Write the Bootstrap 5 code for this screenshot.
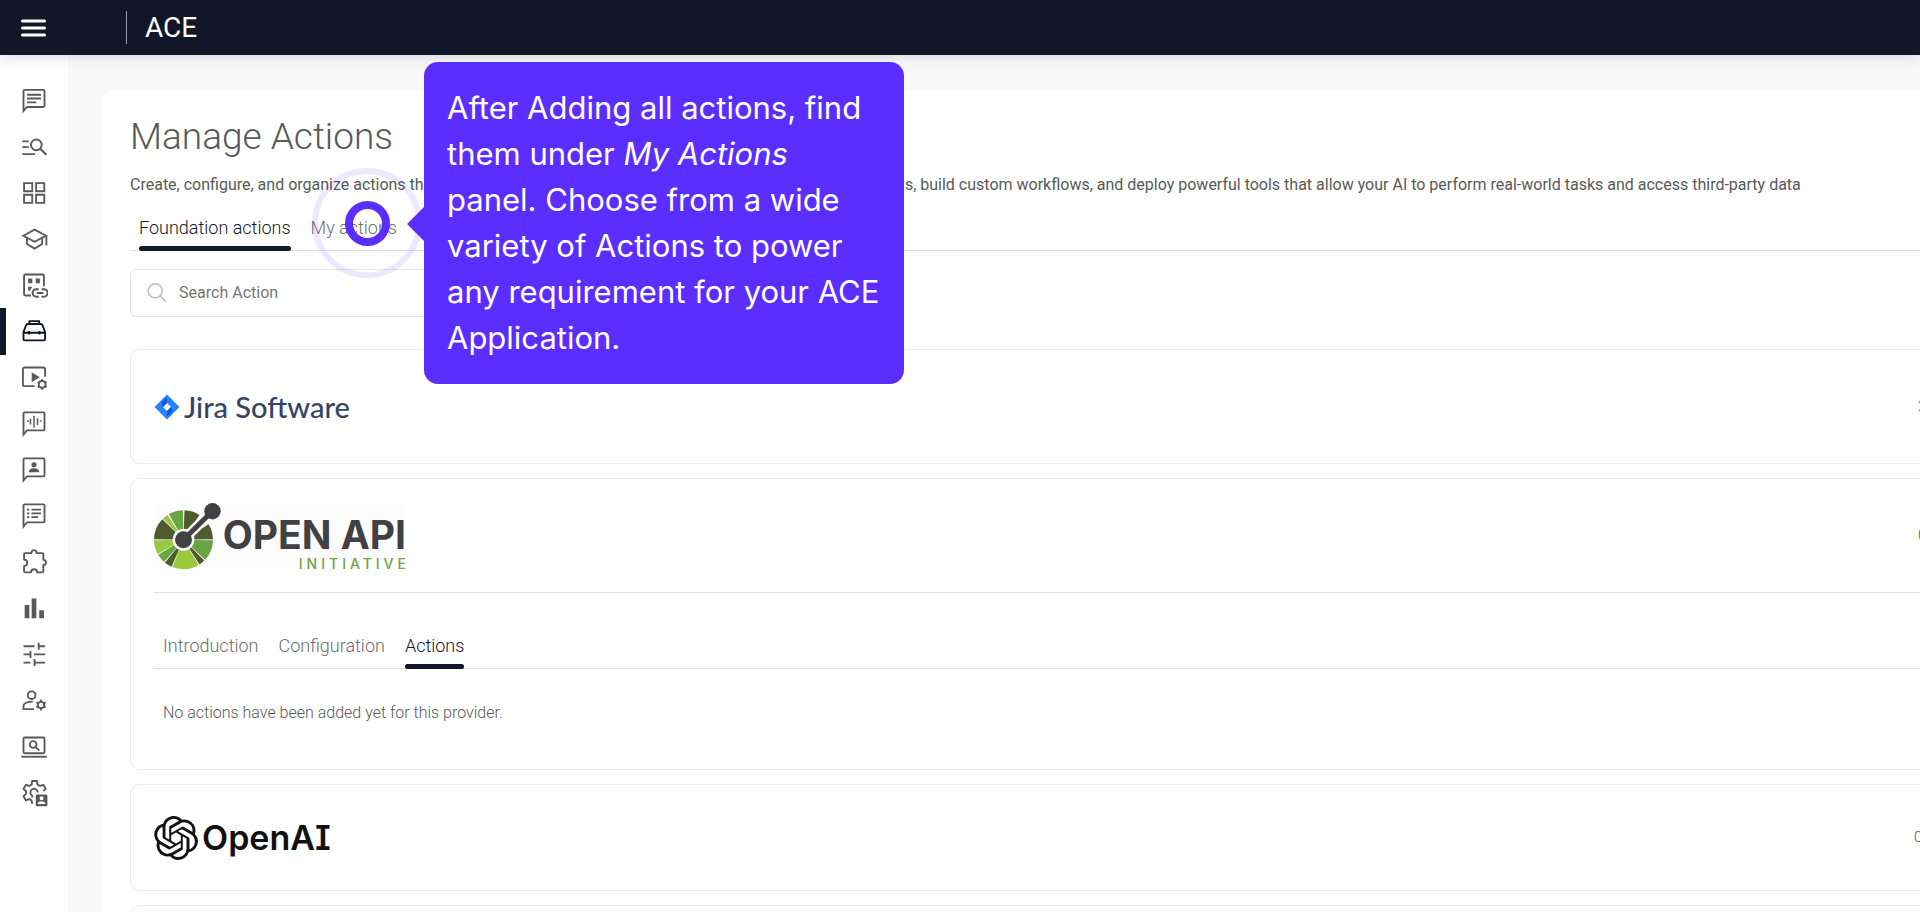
<!DOCTYPE html>
<html lang="en">
<head>
<meta charset="utf-8">
<meta name="viewport" content="width=device-width, initial-scale=1">
<title>ACE - Manage Actions</title>
<link href="https://cdn.jsdelivr.net/npm/bootstrap@5.3.0/dist/css/bootstrap.min.css" rel="stylesheet">
<script src="https://cdn.jsdelivr.net/npm/bootstrap@5.3.0/dist/js/bootstrap.bundle.min.js" defer></script>
<style>
  body { font-family: Roboto, "Liberation Sans", sans-serif; color: #58595b; background: #f9f9f9; }
  .topbar { background: #111628; height: 55px; padding: 0 20px; box-shadow: 0 1px 14px rgba(0,0,0,.16); z-index: 2; }
  .topbar .menu-btn { width: 28px; height: 28px; line-height: 0; }
  .topbar .brand-rule { width: 1px; height: 33px; background: #9a9ca5; margin-left: 78px; margin-right: 18px; }
  .topbar .brand-name { font-size: 28px; line-height: 32px; color: #fff; }
  .side { width: 68px; background: #fff; padding-top: 22px; }
  .side-list { height: 740px; }
  .side-list a { color: #58595b; border-left: 6px solid transparent; padding-right: 7px; }
  .side-list a.active { color: #111628; border-left-color: #111628; }
  .side-list svg { width: 28px; height: 28px; fill: none; stroke: currentColor; stroke-width: 1.6; }
  .side-list .solid { fill: currentColor; stroke: none; }
  .content-area { padding: 35px 0 0 35px; }
  .panel { background: #fff; border-radius: 10px 0 0 0; padding: 24px 24px 0 27px; margin-right: -55px; min-height: 100%; }
  .panel h1 { font-size: 37px; line-height: 46px; font-weight: 300; margin-bottom: 13px; }
  .panel .intro { font-size: 16px; line-height: 24px; margin-bottom: 10px; white-space: nowrap; }
  .tab-line { border-bottom: 1px solid #dfdfe1; gap: 20px; padding-left: 9px; }
  .tab-line .nav-link { font-size: 18px; line-height: 24px; font-weight: 300; color: #6d6e70; padding: 9px 0 6px; border-bottom: 5px solid transparent; margin-bottom: -1px; position: relative; }
  .tab-line .nav-link.active { color: #111628; }
  .tab-line .nav-link.active::after { content: ""; position: absolute; left: 0; right: 0; bottom: -5px; height: 5px; border-radius: 3px; background: #111628; }
  .search-box { width: 400px; height: 48px; margin-top: 18px; margin-bottom: 32px; border: 1px solid #e6e6e8; border-radius: 6px; padding: 0 16px; gap: 12px; }
  .search-box input { font-size: 16px; color: #58595b; }
  .search-box input::placeholder { color: #757679; opacity: 1; }
  .provider-list { gap: 14px; }
  .provider { border: 1px solid #ebebed; border-radius: 10px; padding: 0 23px; }
  .provider-head { min-height: 113px; }
  .provider-head.short { min-height: 105px; }
  .provider-count { font-size: 15px; font-weight: 300; min-width: 9px; }
  .short .provider-count { min-width: 13px; }
  .provider-body { border-top: 1px solid #dfdfe1; padding-top: 32px; padding-bottom: 28px; }
  .provider-body .empty-note { font-size: 16px; line-height: 24px; font-weight: 300; padding: 32px 9px 0; }
  .logo-jira { font: 500 29px/32px Lato, sans-serif; color: #344563; }
  .logo-openapi { background: #fcfcfc; width: 252px; height: 66px; }
  .logo-openapi .word-main { font: 700 39px/40px Inter, sans-serif; color: #414042; white-space: nowrap; }
  .logo-openapi .word-sub { font: 500 14px/18px Inter, sans-serif; letter-spacing: 4px; color: #6aa543; margin-right: -4px; }
  .logo-openai { font: 600 34px/44px Inter, sans-serif; font-feature-settings: "cv08"; color: #111; }
  .hotspot { position: absolute; left: 312px; top: 168px; width: 110px; height: 110px; border: 6px solid rgba(91,46,255,.11); z-index: 3; }
  .hotspot span { width: 45px; height: 45px; border: 8px solid #5b2eff; }
  .tip { position: absolute; left: 424px; top: 62px; width: 480px; padding: 23px; background: #5b2eff; color: #fff; border-radius: 14px; font: 400 31px/46px Inter, sans-serif; z-index: 4; }
  .tip::before { content: ""; position: absolute; left: -17px; top: 145px; border: solid transparent; border-width: 17px 17px 17px 0; border-right-color: #5b2eff; }
</style>
</head>
<body class="vh-100 d-flex flex-column overflow-hidden position-relative">
<header class="topbar d-flex align-items-center flex-shrink-0 position-relative">
  <button type="button" class="menu-btn btn p-0 border-0" aria-label="Menu">
    <svg width="28" height="28" viewBox="0 0 28 28" stroke="#fff" stroke-width="3" stroke-linecap="round"><path d="M2.500 7h22M2.500 14h22M2.500 21h22"/></svg>
  </button>
  <span class="brand-rule"></span>
  <span class="brand-name">ACE</span>
</header>
<div class="d-flex flex-grow-1 overflow-hidden">
  <nav class="side flex-shrink-0" aria-label="Main">
    <ul class="side-list list-unstyled d-flex flex-column m-0">
      <li class="flex-fill d-flex"><a href="#" class="w-100 d-flex align-items-center justify-content-center" aria-label="Chat"><svg viewBox="0 0 24 24"><path d="M3 21.500V4.300a1 1 0 0 1 1-1h16a1 1 0 0 1 1 1v12.700a1 1 0 0 1-1 1H6z"/><path d="M6 7.500h12M6 10.700h12M6 14h8"/></svg></a></li>
      <li class="flex-fill d-flex"><a href="#" class="w-100 d-flex align-items-center justify-content-center" aria-label="Search logs"><svg viewBox="0 0 24 24"><path d="M2 8h5.500M2 13h5.500M2 19h11"/><circle cx="14" cy="11" r="4.600"/><path d="M17.200 14.200L22.500 19.500" stroke-width="1.900"/></svg></a></li>
      <li class="flex-fill d-flex"><a href="#" class="w-100 d-flex align-items-center justify-content-center" aria-label="Dashboard"><svg viewBox="0 0 24 24"><path d="M3.500 3.500h7v7h-7zM13.800 3.500h7v7h-7zM3.500 13.500h7v7h-7zM13.800 13.500h7v7h-7z"/></svg></a></li>
      <li class="flex-fill d-flex"><a href="#" class="w-100 d-flex align-items-center justify-content-center" aria-label="Learning"><svg viewBox="0 0 24 24"><path d="M2.800 9.200L12.500 4l9.700 5.200-9.700 5.200z"/><path d="M6 11v5.300l6.500 3.900 6.500-3.900V11M22.600 9.200v8.300"/></svg></a></li>
      <li class="flex-fill d-flex"><a href="#" class="w-100 d-flex align-items-center justify-content-center" aria-label="Linked apps"><svg viewBox="0 0 24 24"><path d="M9.500 21H4.500a1 1 0 0 1-1-1V4a1 1 0 0 1 1-1h15a1 1 0 0 1 1 1v9"/><path class="solid" d="M7 6.500h3.500v4H7zM13.500 6.500H17v4h-3.500zM7 13.500h3.500L8.500 17H7z"/><path d="M16 22h-2a3.200 3.200 0 0 1 0-6.400h2M18.500 22h2a3.200 3.200 0 0 0 0-6.400h-2M14.500 18.800h5.500" stroke-width="1.700"/></svg></a></li>
      <li class="flex-fill d-flex"><a href="#" class="active w-100 d-flex align-items-center justify-content-center" aria-label="Actions"><svg viewBox="0 0 24 24" stroke-linejoin="round"><path d="M8 6V3.500h8.500V6M3 13l2-5.500C5.300 6.500 6 6 7 6h10.500c1 0 1.700.5 2 1.500L21.500 13v6a1 1 0 0 1-1 1H4a1 1 0 0 1-1-1zM3 13.500h18.500M7.800 12v3M16.700 12v3"/></svg></a></li>
      <li class="flex-fill d-flex"><a href="#" class="w-100 d-flex align-items-center justify-content-center" aria-label="Media settings"><svg viewBox="0 0 24 24"><path d="M12.500 19H4a1.500 1.500 0 0 1-1.500-1.500V4.500A1.500 1.500 0 0 1 4 3h16A1.500 1.500 0 0 1 21.500 4.500V11"/><path class="solid" d="M10 7l7 4.300-7 4.300z"/><path d="M19 13.100v2M19 20v2M15.200 15.300l1.600 1M21.200 18.800l1.600 1M15.200 19.800l1.600-1M21.200 16.300l1.600-1"/><circle cx="19" cy="17.500" r="2.900"/></svg></a></li>
      <li class="flex-fill d-flex"><a href="#" class="w-100 d-flex align-items-center justify-content-center" aria-label="Voice"><svg viewBox="0 0 24 24"><path d="M3 21V3a1 1 0 0 1 1-1h16a1 1 0 0 1 1 1v13.500a1 1 0 0 1-1 1H6z"/><path d="M6 9.700h1.600M9 7.500v5M12 5v10M15 7v6M17 9.500h1.500" stroke-width="1.300"/></svg></a></li>
      <li class="flex-fill d-flex"><a href="#" class="w-100 d-flex align-items-center justify-content-center" aria-label="Agents"><svg viewBox="0 0 24 24"><path d="M3 21V3a1 1 0 0 1 1-1h16a1 1 0 0 1 1 1v13.500a1 1 0 0 1-1 1H6z"/><circle class="solid" cx="12" cy="7.500" r="2.200"/><path class="solid" d="M7.500 14c0-2.500 2-3.500 4.500-3.500s4.500 1 4.500 3.500z"/></svg></a></li>
      <li class="flex-fill d-flex"><a href="#" class="w-100 d-flex align-items-center justify-content-center" aria-label="Transcripts"><svg viewBox="0 0 24 24"><path d="M3 21V3a1 1 0 0 1 1-1h16a1 1 0 0 1 1 1v13.500a1 1 0 0 1-1 1H6z"/><path d="M6 6.500h2M6 9.700h2M6 13h2M9.800 6.500H18M9.800 9.700H18M9.800 13h5.700"/></svg></a></li>
      <li class="flex-fill d-flex"><a href="#" class="w-100 d-flex align-items-center justify-content-center" aria-label="Plugins"><svg viewBox="0 0 24 24" stroke-linejoin="round"><path d="M3.500 4.500a1 1 0 0 1 1-1h5.300c0-1.600.7-2.500 2.200-2.500s2.200.9 2.200 2.500h4.800a1 1 0 0 1 1 1v4.800c1.500 0 2.300.8 2.300 2.200s-.8 2.200-2.300 2.200v5.300a1 1 0 0 1-1 1h-4.300c0-1.700-1.100-2.600-2.600-2.600s-2.600.9-2.600 2.600h-5a1 1 0 0 1-1-1v-4.500c1.800 0 2.700-1.200 2.700-2.700s-.9-2.700-2.700-2.700z"/></svg></a></li>
      <li class="flex-fill d-flex"><a href="#" class="w-100 d-flex align-items-center justify-content-center" aria-label="Analytics"><svg viewBox="0 0 24 24"><path class="solid" d="M4 8.500h4V20H4zM10 3h4v17h-4zM16.500 13h4v7h-4z"/></svg></a></li>
      <li class="flex-fill d-flex"><a href="#" class="w-100 d-flex align-items-center justify-content-center" aria-label="Tuning"><svg viewBox="0 0 24 24"><path d="M3 4.500h9.500M16 4.500h5.500M16 1.500v6M3 11.500h6M12 11.500h9.500M9 8.500v6M3 18.500h6M12 18.500h9.500M12.500 15.500v6"/></svg></a></li>
      <li class="flex-fill d-flex"><a href="#" class="w-100 d-flex align-items-center justify-content-center" aria-label="User settings"><svg viewBox="0 0 24 24"><circle cx="10" cy="7" r="3.300"/><path d="M12 19H3v-2.500c0-2.500 3-4 8-4"/><path d="M18 10.700v2M18 18.100v2M14 13.100l1.700 1M20.300 16.700l1.700 1M14 17.700l1.700-1M20.300 14.100l1.700-1"/><circle cx="18" cy="15.400" r="2.700"/></svg></a></li>
      <li class="flex-fill d-flex"><a href="#" class="w-100 d-flex align-items-center justify-content-center" aria-label="Monitoring"><svg viewBox="0 0 24 24"><rect x="3" y="3" width="18" height="13.500" rx="1"/><path d="M1 19.500h22"/><circle cx="11.300" cy="9" r="2.900"/><path d="M13.500 11.200l3 3"/></svg></a></li>
      <li class="flex-fill d-flex"><a href="#" class="w-100 d-flex align-items-center justify-content-center" aria-label="Account settings"><svg viewBox="0 0 24 24"><path d="M10.500 20.500l-.6-3-2-1.100-2.900 1-2-3.500 2.200-2v-2.300l-2.200-2 2-3.500 2.900 1 2-1.200.6-3h4l.6 3 2 1.200 2.900-1 2 3.500-2.100 1.900"/><path d="M10.500 15v-1.500a3.200 3.200 0 1 1 4.800-2.800"/><path class="solid" fill-rule="evenodd" d="M14.500 12.500h8a1 1 0 0 1 1 1v8a1 1 0 0 1-1 1h-8a1 1 0 0 1-1-1v-8a1 1 0 0 1 1-1zM18.500 14a1.700 1.700 0 1 0 0 3.400 1.700 1.700 0 0 0 0-3.400zM15.200 20.600h6.600c0-1.600-1.500-2.400-3.300-2.400s-3.300.8-3.300 2.400z"/></svg></a></li>
    </ul>
  </nav>
  <main class="content-area flex-grow-1 overflow-hidden">
    <section class="panel">
      <h1>Manage Actions</h1>
      <p class="intro">Create, configure, and organize actions that extend your assistant's capabilities. Connect it to external systems, build custom workflows, and deploy powerful tools that allow your AI to perform real-world tasks and access third-party data</p>
      <ul class="nav tab-line">
        <li class="nav-item"><a class="nav-link active" href="#">Foundation actions</a></li>
        <li class="nav-item"><a class="nav-link" href="#">My actions</a></li>
      </ul>
      <div class="search-box d-flex align-items-center">
        <svg width="22" height="22" viewBox="0 0 22 22" fill="none" stroke="#b9babd" stroke-width="1.500"><circle cx="9" cy="8.500" r="7.700"/><path d="M14.500 14l6.500 6.500"/></svg>
        <input type="text" class="form-control border-0 p-0 shadow-none" placeholder="Search Action" aria-label="Search Action">
      </div>
      <div class="provider-list d-grid">
        <article class="provider">
          <div class="provider-head d-flex align-items-center justify-content-between">
            <div class="logo-jira d-flex align-items-center">
              <svg class="me-1" width="26" height="26" viewBox="0 0 26 26"><path fill="#2684ff" fill-rule="evenodd" d="M13 .5L25.500 13 13 25.500.5 13zM13 9l-4 4 4 4 4-4z"/><path fill="#0f5bd6" d="M13 3.500V9l-4 4c-2.500-3-1-6 4-9.500zM13 22.500V17l4-4c2.500 3 1 6-4 9.500z"/></svg>
              <span>Jira Software</span>
            </div>
            <span class="provider-count">2</span>
          </div>
        </article>
        <article class="provider">
          <div class="provider-head d-flex align-items-center justify-content-between">
            <div class="logo-openapi d-flex">
              <svg class="flex-shrink-0" width="68" height="67" viewBox="0 0 68 67">
                <g fill="none" stroke-width="18.500">
                  <g stroke="#6aa543"><circle cx="29.500" cy="36.700" r="20.250" pathLength="360" stroke-dasharray="42 318" stroke-dashoffset="-1"/><circle cx="29.500" cy="36.700" r="20.250" pathLength="360" stroke-dasharray="18 342" stroke-dashoffset="-131"/><circle cx="29.500" cy="36.700" r="20.250" pathLength="360" stroke-dasharray="29 331" stroke-dashoffset="-240"/></g>
                  <g stroke="#4f5b2e"><circle cx="29.500" cy="36.700" r="20.250" pathLength="360" stroke-dasharray="12 348" stroke-dashoffset="-45"/><circle cx="29.500" cy="36.700" r="20.250" pathLength="360" stroke-dasharray="15 345" stroke-dashoffset="-114"/><circle cx="29.500" cy="36.700" r="20.250" pathLength="360" stroke-dasharray="43 317" stroke-dashoffset="-181"/><circle cx="29.500" cy="36.700" r="20.250" pathLength="360" stroke-dasharray="31 329" stroke-dashoffset="-272"/><circle cx="29.500" cy="36.700" r="20.250" pathLength="360" stroke-dasharray="31 329" stroke-dashoffset="-328"/></g>
                  <g stroke="#97c93d"><circle cx="29.500" cy="36.700" r="20.250" pathLength="360" stroke-dasharray="53 307" stroke-dashoffset="-59"/><circle cx="29.500" cy="36.700" r="20.250" pathLength="360" stroke-dasharray="28 332" stroke-dashoffset="-151"/><circle cx="29.500" cy="36.700" r="20.250" pathLength="360" stroke-dasharray="11 349" stroke-dashoffset="-226"/></g>
                </g>
                <path d="M29.500 36.700L58.500 8" stroke="#fcfcfc" stroke-width="10"/>
                <path d="M29.500 36.700L58.500 8" stroke="#414042" stroke-width="5"/>
                <circle cx="29.500" cy="36.700" r="8.500" fill="#414042"/><circle cx="58.500" cy="8.300" r="8.200" fill="#414042"/>
              </svg>
              <div class="d-flex flex-column align-items-end flex-grow-1 pt-2 mt-1">
                <span class="word-main">OPEN API</span>
                <span class="word-sub">INITIATIVE</span>
              </div>
            </div>
            <span class="provider-count">0</span>
          </div>
          <div class="provider-body">
            <ul class="nav tab-line">
              <li class="nav-item"><a class="nav-link" href="#">Introduction</a></li>
              <li class="nav-item"><a class="nav-link" href="#">Configuration</a></li>
              <li class="nav-item"><a class="nav-link active" href="#">Actions</a></li>
            </ul>
            <p class="empty-note">No actions have been added yet for this provider.</p>
          </div>
        </article>
        <article class="provider">
          <div class="provider-head short d-flex align-items-center justify-content-between">
            <div class="logo-openai d-flex align-items-center">
              <svg class="me-1" width="44" height="44" viewBox="0 0 24 24" fill="#111"><path d="M22.2819 9.8211a5.9847 5.9847 0 0 0-.5157-4.9108 6.0462 6.0462 0 0 0-6.5098-2.9A6.0651 6.0651 0 0 0 4.9807 4.1818a5.9847 5.9847 0 0 0-3.9977 2.9 6.0462 6.0462 0 0 0 .7427 7.0966 5.98 5.98 0 0 0 .511 4.9107 6.051 6.051 0 0 0 6.5146 2.9001A5.9847 5.9847 0 0 0 13.2599 24a6.0557 6.0557 0 0 0 5.7718-4.2058 5.9894 5.9894 0 0 0 3.9977-2.9001 6.0557 6.0557 0 0 0-.7475-7.0729zm-9.022 12.6081a4.4755 4.4755 0 0 1-2.8764-1.0408l.1419-.0804 4.7783-2.7582a.7948.7948 0 0 0 .3927-.6813v-6.7369l2.02 1.1686a.071.071 0 0 1 .038.052v5.5826a4.504 4.504 0 0 1-4.4945 4.4944zm-9.6607-4.1254a4.4708 4.4708 0 0 1-.5346-3.0137l.142.0852 4.783 2.7582a.7712.7712 0 0 0 .7806 0l5.8428-3.3685v2.3324a.0804.0804 0 0 1-.0332.0615L9.74 19.9502a4.4992 4.4992 0 0 1-6.1408-1.6464zM2.3408 7.8956a4.485 4.485 0 0 1 2.3655-1.9728V11.6a.7664.7664 0 0 0 .3879.6765l5.8144 3.3543-2.0201 1.1685a.0757.0757 0 0 1-.071 0l-4.8303-2.7865A4.504 4.504 0 0 1 2.3408 7.872zm16.5963 3.8558L13.1038 8.364 15.1192 7.2a.0757.0757 0 0 1 .071 0l4.8303 2.7913a4.4944 4.4944 0 0 1-.6765 8.1042v-5.6772a.79.79 0 0 0-.407-.667zm2.0107-3.0231l-.142-.0852-4.7735-2.7818a.7759.7759 0 0 0-.7854 0L9.409 9.2297V6.8974a.0662.0662 0 0 1 .0284-.0615l4.8303-2.7866a4.4992 4.4992 0 0 1 6.6802 4.66zM8.3065 12.863l-2.02-1.1638a.0804.0804 0 0 1-.038-.0567V6.0742a4.4992 4.4992 0 0 1 7.3757-3.4537l-.142.0805L8.704 5.459a.7948.7948 0 0 0-.3927.6813zm1.0976-2.3654l2.602-1.4998 2.6069 1.4998v2.9994l-2.5974 1.4997-2.6067-1.4997Z"/></svg>
              <span>OpenAI</span>
            </div>
            <span class="provider-count">0</span>
          </div>
        </article>
        <article class="provider"><div class="provider-head"></div></article>
      </div>
    </section>
  </main>
</div>
<div class="hotspot rounded-circle d-flex align-items-center justify-content-center"><span class="rounded-circle"></span></div>
<div class="tip" role="tooltip">After Adding all actions, find them under <em>My Actions</em> panel. Choose from a wide variety of Actions to power any requirement for your ACE Application.</div>
</body>
</html>
